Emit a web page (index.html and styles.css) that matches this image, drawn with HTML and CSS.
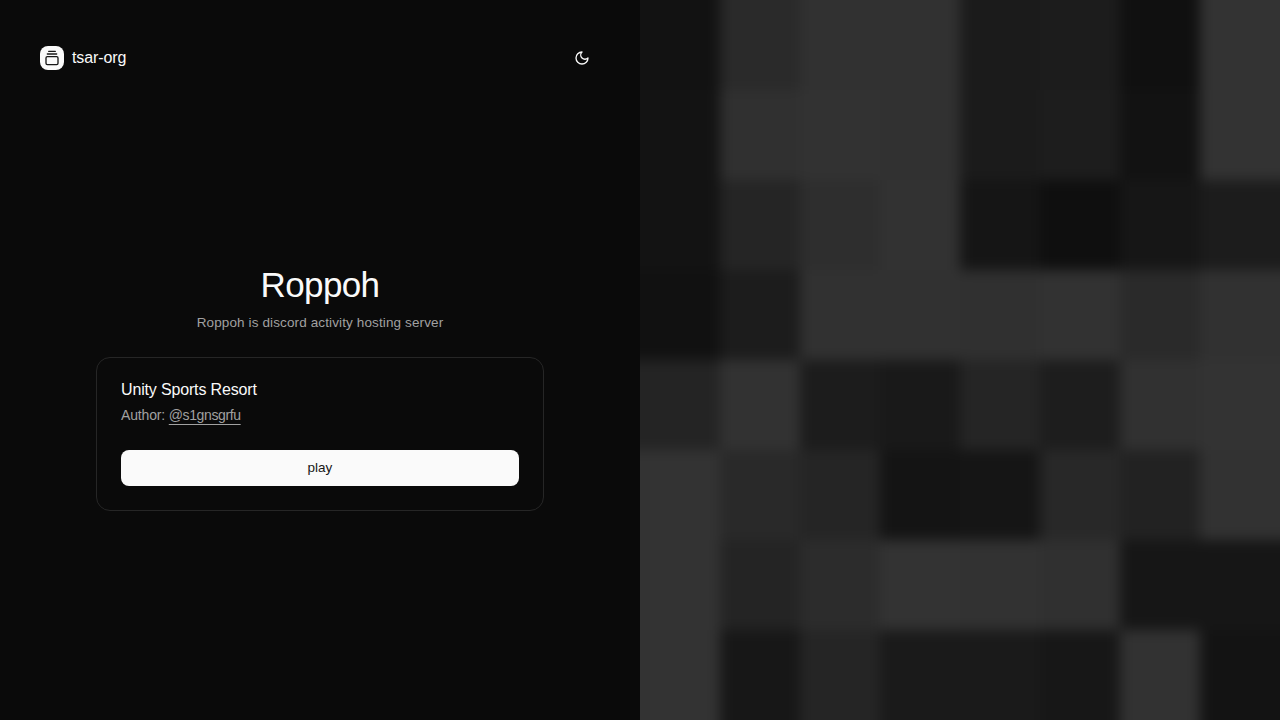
FILE: index.html
```html
<!DOCTYPE html>
<html lang="en">
<head>
<meta charset="utf-8">
<title>Roppoh</title>
<link rel="stylesheet" href="styles.css">
</head>
<body>
<div class="page">
  <div class="panel">
    <header class="topbar">
      <a class="brand"><span class="brand-mark"><svg class="icon" viewBox="0 0 24 24"><path d="M7 2h10M5 6h14"/><rect width="18" height="12" x="3" y="10" rx="2"/></svg></span><span class="brand-name">tsar-org</span></a>
      <button class="theme"><svg class="icon" viewBox="0 0 24 24"><path d="M12 3a6 6 0 0 0 9 9 9 9 0 1 1-9-9Z"/></svg></button>
    </header>
    <main class="main">
      <div class="content">
        <h1 class="title"><span>Roppoh</span></h1>
        <p class="subtitle"><span>Roppoh is discord activity hosting server</span></p>
        <section class="card">
          <h2 class="card-title"><span>Unity Sports Resort</span></h2>
          <p class="author"><span class="author-label">Author:</span> <a class="author-link">@s1gnsgrfu</a></p>
          <button class="play"><span>play</span></button>
        </section>
      </div>
    </main>
  </div>
  <svg class="mosaic" id="mosaic" viewBox="0 0 640 720">
    <defs><filter id="soft" filterUnits="userSpaceOnUse" x="-40" y="-40" width="720" height="800" color-interpolation-filters="sRGB"><feGaussianBlur stdDeviation="6.2"/></filter></defs>
    <g id="cells" filter="url(#soft)"></g>
  </svg>
</div>
<script src="mosaic.js"></script>
</body>
</html>
```
FILE: styles.css
```css
* { box-sizing: border-box; }
body {
  margin: 0;
  background: #0a0a0a;
  color: #fafafa;
  font-family: "Liberation Sans", Arial, sans-serif;
}
h1, h2, p { margin: 0; font-weight: 400; }
button { font: inherit; border: 0; padding: 0; }
.page { display: grid; grid-template-columns: 1fr 1fr; height: 720px; overflow: hidden; }
.panel { display: flex; flex-direction: column; padding: 40px; }
.topbar { display: flex; justify-content: space-between; align-items: center; height: 36px; }
.brand { display: flex; align-items: center; gap: 8px; font-size: 16px; line-height: 24px; }
.brand-name { letter-spacing: -0.1px; }
.brand-mark {
  display: flex; align-items: center; justify-content: center;
  width: 24px; height: 24px; border-radius: 8px; background: #fafafa; color: #171717;
}
.icon {
  width: 16px; height: 16px; fill: none; stroke: currentColor;
  stroke-width: 2; stroke-linecap: round; stroke-linejoin: round;
}
.theme {
  display: flex; align-items: center; justify-content: center;
  width: 36px; height: 36px; background: transparent; color: #fafafa;
}
.main { flex: 1; display: flex; align-items: center; justify-content: center; }
.content { width: 448px; padding-top: 21px; }
.title { font-size: 35px; line-height: 38px; text-align: center; letter-spacing: -0.6px; }
.subtitle { margin-top: 9px; font-size: 13.5px; line-height: 20px; text-align: center; letter-spacing: 0.12px; color: #a1a1a1; }
.card {
  margin-top: 24px; height: 154px; padding: 20px 24px 24px;
  border: 1px solid #262626; border-radius: 14px;
  display: flex; flex-direction: column; align-items: stretch;
}
.card-title { font-size: 16px; line-height: 24px; letter-spacing: -0.16px; }
.author { margin-top: 3px; font-size: 14px; line-height: 20px; letter-spacing: -0.16px; color: #a1a1a1; }
.author-link { letter-spacing: -0.38px; text-decoration: underline; text-underline-offset: 4px; text-decoration-skip-ink: none; }
.play {
  margin-top: auto; height: 36px; border-radius: 8px;
  background: #fafafa; color: #171717; font-size: 13.5px; line-height: 20px;
}
.mosaic { display: block; width: 640px; height: 720px; background: #222; }
```
FILE: mosaic.js
```js
const shades = [
  "12 2a 31 31 1b 1c 10 33",
  "13 30 32 31 1b 1d 12 33",
  "13 25 2e 32 15 0f 16 1c",
  "11 1c 31 31 30 32 2a 31",
  "24 32 1c 19 25 1d 31 33",
  "33 29 25 14 15 28 22 32",
  "33 24 2c 33 32 30 16 16",
  "33 17 25 1a 1a 17 32 13"
].map(row => row.split(" "));
const cells = document.getElementById("cells");
// The outer cells run past the edge so the blur stays solid there.
for (let y = -1; y <= 8; y++) {
  for (let x = -1; x <= 8; x++) {
    const v = shades[Math.max(0, Math.min(7, y))][Math.max(0, Math.min(7, x))];
    const r = document.createElementNS("http://www.w3.org/2000/svg", "rect");
    r.setAttribute("x", x * 80);
    r.setAttribute("y", y * 90);
    r.setAttribute("width", 80);
    r.setAttribute("height", 90);
    r.setAttribute("fill", "#" + v + v + v);
    cells.appendChild(r);
  }
}
```
